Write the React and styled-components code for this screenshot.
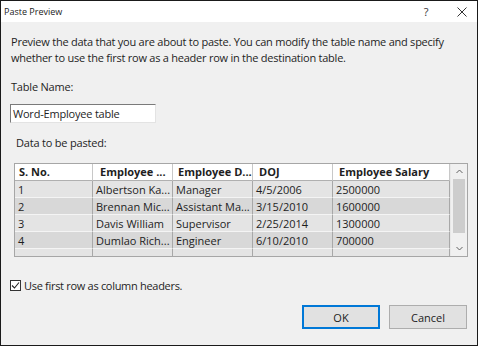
import styled, { createGlobalStyle } from "styled-components";

const GlobalStyle = createGlobalStyle`
  html, body {
    margin: 0;
    padding: 0;
    background: #f0f0f0;
  }
  body {
    font-family: "Open Sans", "Noto Sans", "Liberation Sans", sans-serif;
    color: #1e1e1e;
  }
`;

const Dialog = styled.div`
  width: 478px;
  height: 346px;
  box-sizing: border-box;
  border: 1px solid #1a1a1a;
  background: #f0f0f0;
  display: flex;
  flex-direction: column;
  overflow: hidden;
`;

const TitleBar = styled.div`
  height: 21px;
  background: #fff;
  display: flex;
  align-items: center;
  padding-left: 3px;
  font-size: 9px;
  color: #222;
`;

const Title = styled.div`
  flex: 1;
`;

const TitleButton = styled.div`
  width: ${(p) => p.$w}px;
  display: flex;
  justify-content: center;
  align-items: center;
  font-size: 11px;
  color: #333;
`;

const Body = styled.div`
  flex: 1;
  padding: 12px 10px 0 9px;
  display: flex;
  flex-direction: column;
`;

const Description = styled.p`
  margin: 0;
  font-size: 11px;
  line-height: 16px;
  letter-spacing: -0.24px;
  padding-left: 1px;
`;

const Label = styled.div`
  font-size: 11px;
  line-height: 16px;
  letter-spacing: -0.2px;
  margin-top: ${(p) => p.$top}px;
  padding-left: ${(p) => p.$left || 1}px;
`;

const NameInput = styled.div`
  margin-top: 9px;
  width: 146px;
  height: 19px;
  box-sizing: border-box;
  background: #fff;
  border-top: 1px solid #7a7a7a;
  border-left: 1px solid #7a7a7a;
  border-right: 1px solid #e3e3e3;
  border-bottom: 1px solid #e3e3e3;
  font-size: 11px;
  line-height: 17px;
  letter-spacing: -0.2px;
  padding-left: 2px;
`;

const TableFrame = styled.div`
  margin: 12px 0 0 4px;
  width: 454px;
  height: 94px;
  box-sizing: border-box;
  border: 1px solid #a6a6a6;
  background: #f0f0f0;
  display: flex;
  overflow: hidden;
`;

const Grid = styled.div`
  flex: 1;
  display: grid;
  grid-template-columns: 78px 80px 80px 80px 117px;
  grid-auto-rows: 17px;
  align-content: start;
  font-size: 11px;
`;

const HeadCell = styled.div`
  height: 16px;
  background: #fff;
  border-right: 1px solid #c8c8c8;
  border-bottom: 1px solid #b0b0b0;
  font-weight: 700;
  line-height: 16px;
  padding-left: ${(p) => p.$pad}px;
  white-space: nowrap;
  overflow: hidden;
`;

const Cell = styled.div`
  background: ${(p) => (p.$odd ? "#e4e4e4" : "#d8d8d8")};
  border-right: 1px solid #a8a8a8;
  border-bottom: 1px solid #f4f4f4;
  line-height: 17px;
  padding-left: 3px;
  white-space: nowrap;
  overflow: hidden;
`;

const ScrollBar = styled.div`
  width: 16px;
  display: flex;
  flex-direction: column;
  align-items: center;
  background: #f0f0f0;
  border-left: 1px solid #e8e8e8;
`;

const Arrow = styled.div`
  height: 15px;
  display: flex;
  align-items: center;
  justify-content: center;
`;

const Thumb = styled.div`
  width: 12px;
  height: 54px;
  background: #cdcdcd;
`;

const Track = styled.div`
  flex: 1;
`;

const CheckRow = styled.div`
  margin-top: 21px;
  display: flex;
  align-items: center;
  gap: 3px;
  font-size: 11px;
  letter-spacing: -0.3px;
`;

const Box = styled.div`
  width: 11px;
  height: 11px;
  box-sizing: border-box;
  border: 1px solid #333;
  background: #fff;
  display: flex;
  align-items: center;
  justify-content: center;
`;

const Buttons = styled.div`
  margin-top: 12px;
  display: flex;
  justify-content: flex-end;
  gap: 9px;
`;

const Button = styled.div`
  width: 78px;
  height: 24px;
  box-sizing: border-box;
  background: #e1e1e1;
  border: ${(p) => (p.$primary ? "2px solid #0078d7" : "1px solid #adadad")};
  display: flex;
  align-items: center;
  justify-content: center;
  font-size: 11px;
  color: #222;
`;

const headers = [
  { text: "S. No.", pad: 4 },
  { text: "Employee ...", pad: 7 },
  { text: "Employee D...", pad: 5 },
  { text: "DOJ", pad: 6 },
  { text: "Employee Salary", pad: 6 },
];

const rows = [
  ["1", "Albertson Ka...", "Manager", "4/5/2006", "2500000"],
  ["2", "Brennan Mic...", "Assistant Ma...", "3/15/2010", "1600000"],
  ["3", "Davis William", "Supervisor", "2/25/2014", "1300000"],
  ["4", "Dumlao Rich...", "Engineer", "6/10/2010", "700000"],
  ["", "", "", "", ""],
];

export default function App() {
  return (
    <>
      <GlobalStyle />
      <Dialog>
        <TitleBar>
          <Title>Paste Preview</Title>
          <TitleButton $w={42}>?</TitleButton>
          <TitleButton $w={30}>
            <svg width="10" height="10" viewBox="0 0 10 10">
              <path d="M0.5 0.5 L9.5 9.5 M9.5 0.5 L0.5 9.5" stroke="#333" strokeWidth="1" />
            </svg>
          </TitleButton>
        </TitleBar>
        <Body>
          <Description>
            Preview the data that you are about to paste. You can modify the table name and specify
            whether to use the first row as a header row in the destination table.
          </Description>
          <Label $top={13}>Table Name:</Label>
          <NameInput>Word-Employee table</NameInput>
          <Label $top={12} $left={6}>Data to be pasted:</Label>
          <TableFrame>
            <Grid>
              {headers.map((h) => (
                <HeadCell key={h.text} $pad={h.pad}>
                  {h.text}
                </HeadCell>
              ))}
              {rows.map((r, i) =>
                r.map((c, j) => (
                  <Cell key={i + "-" + j} $odd={i % 2 === 0}>
                    {c}
                  </Cell>
                ))
              )}
            </Grid>
            <ScrollBar>
              <Arrow>
                <svg width="7" height="5" viewBox="0 0 7 5">
                  <path d="M0.5 4 L3.5 1 L6.5 4" fill="none" stroke="#606060" strokeWidth="1" />
                </svg>
              </Arrow>
              <Thumb />
              <Track />
              <Arrow>
                <svg width="7" height="5" viewBox="0 0 7 5">
                  <path d="M0.5 1 L3.5 4 L6.5 1" fill="none" stroke="#606060" strokeWidth="1" />
                </svg>
              </Arrow>
            </ScrollBar>
          </TableFrame>
          <CheckRow>
            <Box>
              <svg width="9" height="9" viewBox="0 0 9 9">
                <path d="M1 4.5 L3.5 7 L8 1.5" fill="none" stroke="#222" strokeWidth="1.1" />
              </svg>
            </Box>
            Use first row as column headers.
          </CheckRow>
          <Buttons>
            <Button $primary>OK</Button>
            <Button>Cancel</Button>
          </Buttons>
        </Body>
      </Dialog>
    </>
  );
}
